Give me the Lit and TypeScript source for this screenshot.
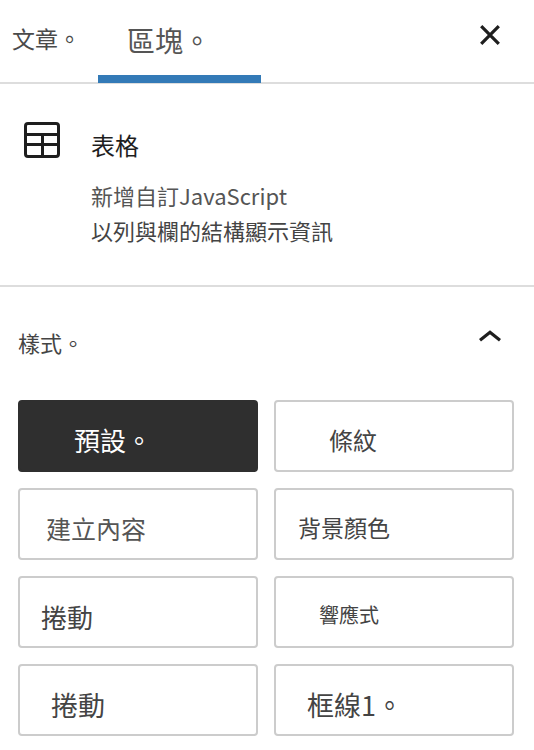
import { LitElement, html, css } from "lit";
import { customElement } from "lit/decorators.js";

interface BlockStyle {
  name: string;
  label: string;
  active?: boolean;
}

const BLOCK_STYLES: BlockStyle[] = [
  { name: "default", label: "預設。", active: true },
  { name: "stripes", label: "條紋" },
  { name: "content", label: "建立內容" },
  { name: "background", label: "背景顏色" },
  { name: "scroll", label: "捲動" },
  { name: "responsive", label: "響應式" },
  { name: "scroll-alt", label: "捲動" },
  { name: "border", label: "框線1。" },
];

@customElement("app-root")
export class AppRoot extends LitElement {
  static styles = css`
    :host {
      display: block;
      box-sizing: border-box;
      height: 750px;
      overflow: hidden;
      background: #fff;
      color: #444;
      font-family: "Noto Sans CJK TC", sans-serif;
      font-weight: 400;
    }
    * { box-sizing: border-box; }
    svg { display: block; flex: none; }
    .tabs {
      display: flex;
      height: 84px;
      border-bottom: 2px solid #ddd;
      line-height: 40px;
      white-space: nowrap;
    }
    .tab { height: 83px; color: #4a4a4a; }
    .post { width: 98px; padding: 18px 0 0 12px; font-size: 23px; }
    .block {
      width: 163px;
      padding: 20px 0 0 29px;
      font-size: 28px;
      color: #555;
      border-bottom: 8px solid #337ab7;
    }
    .close { margin: 25px 34px 0 auto; }
    .card {
      display: flex;
      gap: 31px;
      height: 203px;
      padding: 38px 24px 0;
      border-bottom: 2px solid #ddd;
      white-space: nowrap;
    }
    .name { margin-top: 3px; font-size: 24px; line-height: 40px; color: #1e1e1e; }
    .desc { font-size: 22px; line-height: 35px; }
    .desc.first { margin-top: 13px; color: #555; }
    .heading {
      display: flex;
      justify-content: space-between;
      height: 113px;
      padding: 35px 32px 0 18px;
      font-size: 22px;
      line-height: 40px;
    }
    .chevron { margin-top: 7px; }
    .grid {
      display: grid;
      grid-template-columns: 240px 240px;
      grid-auto-rows: 72px;
      gap: 16px;
      padding-left: 18px;
    }
    .option {
      display: flex;
      align-items: center;
      margin: 0;
      padding: 8px 0 0;
      border: 2px solid #ccc;
      border-radius: 4px;
      background: #fff;
      color: #444;
      font-family: inherit;
      font-weight: inherit;
      line-height: 40px;
      white-space: nowrap;
    }
    .active { background: #2f2f2f; border-color: #2f2f2f; color: #fff; }
    .default { padding-left: 54px; font-size: 26px; }
    .stripes { padding-left: 53px; font-size: 24px; }
    .content { padding-left: 26px; font-size: 25px; color: #555; }
    .background { padding-left: 22px; padding-top: 6px; font-size: 23px; }
    .scroll { padding-left: 21px; padding-top: 10px; font-size: 26px; }
    .responsive { padding-left: 43px; padding-top: 6px; font-size: 20px; }
    .scroll-alt { padding-left: 31px; padding-top: 10px; font-size: 27px; }
    .border { padding-left: 31px; padding-top: 10px; font-size: 27px; }
  `;

  render() {
    return html`
      <nav class="tabs">
        <div class="tab post">文章。</div>
        <div class="tab block">區塊。</div>
        <svg class="close" width="20" height="20" viewBox="0 0 20 20" fill="none" stroke="#1e1e1e" stroke-width="3.2">
          <path d="M1.2 1.2 18.8 18.8M18.8 1.2 1.2 18.8" />
        </svg>
      </nav>
      <section class="card">
        <svg width="36" height="36" viewBox="0 0 36 36" fill="none" stroke="#1e1e1e" stroke-width="3">
          <rect x="1.5" y="1.5" width="33" height="33" rx="2.5" />
          <path d="M1.5 12.5H34.5M1.5 22.5H34.5M18.5 12.5V34.5" />
        </svg>
        <div>
          <div class="name">表格</div>
          <div class="desc first">新增自訂JavaScript</div>
          <div class="desc">以列與欄的結構顯示資訊</div>
        </div>
      </section>
      <section>
        <div class="heading">
          <span>樣式。</span>
          <svg class="chevron" width="24" height="14" viewBox="0 0 24 14" fill="none" stroke="#1e1e1e" stroke-width="3.2">
            <path d="M2 11.2 12 3.2 22 11.2" />
          </svg>
        </div>
        <div class="grid">
          ${BLOCK_STYLES.map(
            (s) => html`<button class="option ${s.name} ${s.active ? "active" : ""}">${s.label}</button>`
          )}
        </div>
      </section>
    `;
  }
}
